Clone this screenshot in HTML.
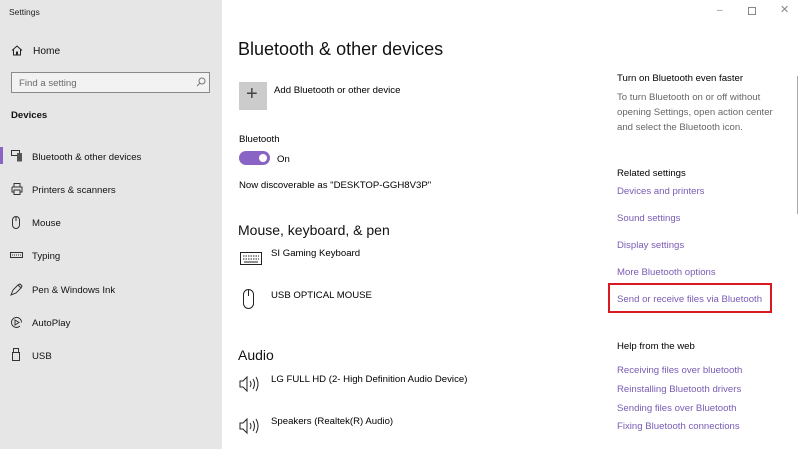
<!DOCTYPE html>
<html><head><meta charset="utf-8"><style>
*{margin:0;padding:0;box-sizing:border-box}
body{width:800px;height:449px;overflow:hidden;background:#fff;font-family:"Liberation Sans",sans-serif;color:#000;position:relative}
.a{position:absolute;white-space:nowrap}
#side{position:absolute;left:0;top:0;width:222px;height:449px;background:#e6e6e6}
.s{font-size:9.6px;margin-top:1px}
.nav{font-size:9.6px;color:#111;margin-top:1px}
.lk{font-size:9.6px;color:#7a5bb4;margin-top:1px}
.g{font-size:9.6px;color:#666;line-height:15px;margin-top:1px}
svg{position:absolute}
</style></head><body>
<div id="side"></div>
<div class="a" style="left:9px;top:7px;font-size:8.5px;color:#222">Settings</div>
<svg style="left:11px;top:45px" width="12" height="11" viewBox="0 0 12 11"><path d="M1 5.5L6 1l5 4.5M2.5 4.5V10h3V7h1v3h3V4.5" fill="none" stroke="#222" stroke-width="1"/></svg>
<div class="a nav" style="left:33px;top:45px;font-size:10.2px">Home</div>
<div class="a" style="left:11px;top:72px;width:199px;height:21px;border:1px solid #8a8a8a;background:#f2f2f2"></div>
<div class="a" style="left:19px;top:77px;font-size:9.6px;color:#6a6a6a;margin-top:1px">Find a setting</div>
<svg style="left:196px;top:77px" width="10" height="10" viewBox="0 0 10 10"><circle cx="6" cy="4" r="3" fill="none" stroke="#777"/><path d="M4 6L1 9" stroke="#777"/></svg>
<div class="a" style="left:11px;top:110px;font-size:9.6px;font-weight:bold;color:#111">Devices</div>
<div class="a" style="left:0;top:147px;width:3px;height:17px;background:#8a64c4"></div>
<svg style="left:11px;top:150px" width="12" height="12" viewBox="0 0 12 12"><rect x=".5" y=".5" width="8" height="5" fill="none" stroke="#333"/><rect x="6" y="3" width="5" height="8.5" fill="#555"/></svg>
<div class="a nav" style="left:32px;top:151px">Bluetooth &amp; other devices</div>
<svg style="left:11px;top:183px" width="12" height="12" viewBox="0 0 12 12"><path d="M3 4V.5h6V4M1 4h10v5H9M3 9H1V4M3 7h6v4.5H3z" fill="none" stroke="#333"/></svg>
<div class="a nav" style="left:32px;top:184px">Printers &amp; scanners</div>
<svg style="left:12px;top:216px" width="8" height="13" viewBox="0 0 8 13"><rect x=".5" y=".5" width="7" height="12" rx="3.5" fill="none" stroke="#333"/><path d="M4 1v4" stroke="#333"/></svg>
<div class="a nav" style="left:32px;top:217px">Mouse</div>
<svg style="left:10px;top:252px" width="13" height="6" viewBox="0 0 13 6"><rect x=".5" y=".5" width="12" height="5" fill="none" stroke="#333"/><path d="M2 3h9" stroke="#333" stroke-dasharray="1 1"/></svg>
<div class="a nav" style="left:32px;top:250px">Typing</div>
<svg style="left:10px;top:283px" width="13" height="13" viewBox="0 0 13 13"><path d="M1 12L3 7l5-5 3 3-5 5zM8 2l2-1 2 2-1 2" fill="none" stroke="#333"/></svg>
<div class="a nav" style="left:32px;top:284px">Pen &amp; Windows Ink</div>
<svg style="left:10px;top:316px" width="13" height="13" viewBox="0 0 13 13"><path d="M10 10A5 5 0 1 1 11.5 6.5" fill="none" stroke="#333"/><path d="M5 4v5l4-2.5z" fill="none" stroke="#333"/></svg>
<div class="a nav" style="left:32px;top:317px">AutoPlay</div>
<svg style="left:12px;top:348px" width="8" height="13" viewBox="0 0 8 13"><rect x="1.5" y=".5" width="5" height="4" fill="none" stroke="#333"/><rect x=".5" y="4.5" width="7" height="8" fill="none" stroke="#333"/></svg>
<div class="a nav" style="left:32px;top:350px">USB</div>

<div class="a" style="left:717px;top:5px;font-size:10px;color:#888">&#8211;</div>
<div class="a" style="left:748px;top:7px;width:8px;height:8px;border:1px solid #888"></div>
<div class="a" style="left:780px;top:3px;font-size:11px;color:#888">&#10005;</div>
<div class="a" style="left:797px;top:76px;width:1px;height:138px;background:#aaa"></div>

<div class="a" style="left:238px;top:39px;font-size:18px;color:#111">Bluetooth &amp; other devices</div>
<div class="a" style="left:239px;top:82px;width:28px;height:28px;background:#ccc"></div>
<div class="a" style="left:246px;top:83px;font-size:20px;color:#444;font-weight:200">+</div>
<div class="a s" style="left:274px;top:84px">Add Bluetooth or other device</div>
<div class="a s" style="left:239px;top:133px">Bluetooth</div>
<div class="a" style="left:239px;top:151px;width:31px;height:14px;border-radius:7px;background:#8a64c4"></div>
<div class="a" style="left:259px;top:154px;width:8px;height:8px;border-radius:4px;background:#fff"></div>
<div class="a s" style="left:277px;top:153px">On</div>
<div class="a s" style="left:239px;top:179px">Now discoverable as "DESKTOP-GGH8V3P"</div>
<div class="a" style="left:238px;top:222px;font-size:14px;color:#111">Mouse, keyboard, &amp; pen</div>
<svg style="left:240px;top:252px" width="22" height="13" viewBox="0 0 22 13"><rect x=".5" y=".5" width="21" height="12" fill="none" stroke="#222"/><path d="M3 4h16M3 7h16" stroke="#222" stroke-dasharray="1.5 1"/><path d="M4 10h14" stroke="#222"/></svg>
<div class="a s" style="left:271px;top:247px">SI Gaming Keyboard</div>
<svg style="left:243px;top:289px" width="11" height="20" viewBox="0 0 11 20"><rect x=".5" y=".5" width="10" height="19" rx="5" fill="none" stroke="#222"/><path d="M5.5 1v6" stroke="#222"/></svg>
<div class="a s" style="left:271px;top:289px">USB OPTICAL MOUSE</div>
<div class="a" style="left:238px;top:347px;font-size:14px;color:#111">Audio</div>
<svg style="left:239px;top:374px" width="22" height="20" viewBox="0 0 22 20"><path d="M1 7h3l4-4v14l-4-4H1z" fill="none" stroke="#222"/><path d="M11 7q2 3 0 6M14 5q3 5 0 10M17 3q4 7 0 14" fill="none" stroke="#222"/></svg>
<div class="a s" style="left:271px;top:373px">LG FULL HD (2- High Definition Audio Device)</div>
<svg style="left:239px;top:416px" width="22" height="20" viewBox="0 0 22 20"><path d="M1 7h3l4-4v14l-4-4H1z" fill="none" stroke="#222"/><path d="M11 7q2 3 0 6M14 5q3 5 0 10M17 3q4 7 0 14" fill="none" stroke="#222"/></svg>
<div class="a s" style="left:271px;top:415px">Speakers (Realtek(R) Audio)</div>

<div class="a s" style="left:617px;top:72px">Turn on Bluetooth even faster</div>
<div class="a g" style="left:617px;top:89px">To turn Bluetooth on or off without<br>opening Settings, open action center<br>and select the Bluetooth icon.</div>
<div class="a s" style="left:617px;top:167px">Related settings</div>
<div class="a lk" style="left:617px;top:185px">Devices and printers</div>
<div class="a lk" style="left:617px;top:212px">Sound settings</div>
<div class="a lk" style="left:617px;top:239px">Display settings</div>
<div class="a lk" style="left:617px;top:266px">More Bluetooth options</div>
<div class="a" style="left:608px;top:283px;width:164px;height:30px;border:2px solid #d81920"></div>
<div class="a lk" style="left:617px;top:293px">Send or receive files via Bluetooth</div>
<div class="a s" style="left:617px;top:340px">Help from the web</div>
<div class="a lk" style="left:617px;top:364px">Receiving files over bluetooth</div>
<div class="a lk" style="left:617px;top:383px">Reinstalling Bluetooth drivers</div>
<div class="a lk" style="left:617px;top:402px">Sending files over Bluetooth</div>
<div class="a lk" style="left:617px;top:420px">Fixing Bluetooth connections</div>
</body></html>
